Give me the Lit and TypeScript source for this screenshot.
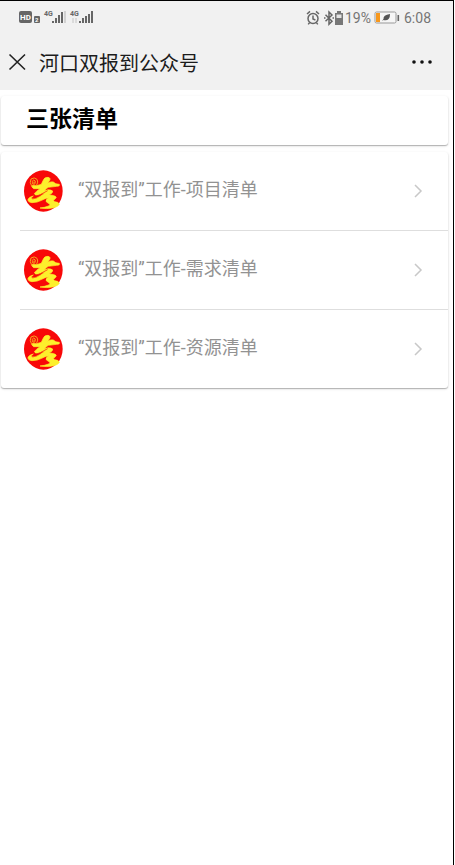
import { LitElement, html, css, svg } from "lit";
import { customElement, property } from "lit/decorators.js";

const bars = (x: number, heights: number[]) =>
  heights.map((h, i) => svg`<rect x=${x + i * 3} y=${13 - h} width="2" height=${h} />`);

@customElement("status-bar")
export class StatusBar extends LitElement {
  static styles = css`
    :host {
      display: flex;
      justify-content: space-between;
      align-items: center;
      height: 33px;
      padding: 0 22px 0 18px;
      font-size: 14px;
      color: #757575;
      fill: #666;
    }
    svg {
      display: block;
    }
    .group {
      display: flex;
      align-items: center;
    }
    .label {
      font-weight: bold;
    }
    .battery {
      margin: 0 4px 0 3px;
    }
    .phone {
      margin-right: 1px;
    }
  `;

  render() {
    return html`
      <div class="group">
        <svg width="76" height="16" viewBox="0 0 76 16" aria-label="信号">
          <rect x="1" y="1" width="13" height="12" rx="2" />
          <text x="2" y="10" font-size="8" class="label" fill="#fff">HD</text>
          <rect x="16" y="6" width="6" height="7" rx="1" />
          <text x="17" y="12" font-size="6" class="label" fill="#fff">2</text>
          <text x="26" y="6" font-size="7" class="label">4G</text>
          ${bars(34, [2, 5, 8, 11])}
          <rect x="46" y="1" width="2" height="12" fill="#d2d2d2" />
          <text x="52" y="6" font-size="7" class="label">4G</text>
          <path d="M55 8v5M58 8v5" stroke="#c4c4c4" />
          ${bars(61, [2, 5, 7, 9, 12])}
        </svg>
      </div>
      <div class="group">
        <svg class="phone" width="38" height="16" viewBox="0 0 38 16" aria-hidden="true">
          <g fill="none" stroke="#666" stroke-width="1.5">
            <circle cx="7" cy="8.5" r="5" />
            <path d="M7 5.5v3.500l2.400 1M1 4l3-2.600M13 4l-3-2.600M3.600 12.600l-1.400 1.800M10.400 12.600l1.400 1.800" />
            <path d="M19.500 4.800l6.500 6.400-3 3V2l3 3-6.500 6.200" />
            <path d="M18 8h1.500M26.500 8h1.500" />
          </g>
          <path d="M31 1h4v2h2v12h-8V3h2z" fill="#777" />
          <path d="M30.500 4.500h5v3.500h-5z" fill="#e4e4e4" />
        </svg>
        <span>19%</span>
        <svg class="battery" width="26" height="13" viewBox="0 0 26 13" aria-hidden="true">
          <rect x="1" y="1" width="21" height="11" rx="1.5" fill="#f6f6f6" stroke="#999" />
          <rect x="2" y="2" width="4" height="9" fill="#f7981d" />
          <path d="M8 10l1.500-2Q9 4 16 3q0 6-4 6.200Q10.500 9.500 9.500 9z" fill="#555" />
          <rect x="23.500" y="4" width="1.600" height="6" fill="#666" />
        </svg>
        <span>6:08</span>
      </div>
    `;
  }
}

@customElement("list-entry")
export class ListEntry extends LitElement {
  @property() label = "";

  static styles = css`
    :host {
      display: block;
    }
    .link {
      display: flex;
      align-items: center;
      height: 78px;
      padding: 0 24px 0 3px;
      color: #929292;
      font-size: 18px;
      text-decoration: none;
    }
    .logo {
      flex: none;
      margin-right: 15px;
    }
    .text {
      flex: 1;
      padding-bottom: 6px;
    }
    svg {
      display: block;
    }
  `;

  render() {
    return html`
      <a class="link" href="#">
        <svg class="logo" width="40" height="42" viewBox="24 28 120 126" aria-hidden="true">
          <ellipse cx="85" cy="91" rx="58" ry="62" fill="#f80808" />
          <g fill="#fdf02c" stroke="#fdf02c" stroke-width="2" stroke-linejoin="round">
            <path d="M84 60Q88 49 99 50Q109 52 103 61L98 68Q107 62 115 64Q121 71 133 71Q136 77 125 77L100 80Q92 84 88 91Q99 85 107 88Q117 90 111 97L103 103Q111 103 119 106Q128 109 120 115Q112 119 119 123Q132 124 133 131Q130 138 117 141Q95 146 75 142Q88 141 101 136Q109 132 100 128Q89 123 95 116L101 111Q90 113 80 119Q67 126 51 126Q38 125 39 116Q42 109 55 106Q46 112 50 115Q59 118 74 108L91 97Q80 98 71 103Q60 105 58 99Q63 92 75 84L56 84Q47 79 53 74Q65 77 79 71Z" />
          </g>
          <path d="M51 79Q42 64 48 55Q58 48 66 56Q71 64 65 73M54 71Q49 61 56 58Q64 59 60 69M57 63v10" fill="none" stroke="#f5a51d" stroke-width="3" />
          <path d="M57 109Q75 104 98 90" fill="none" stroke="#f80808" stroke-width="2" />
        </svg>
        <span class="text">${this.label}</span>
        <svg width="12" height="16" viewBox="0 0 12 16" aria-hidden="true">
          <path d="M3 2l6 6-6 6" fill="none" stroke="#c8c8c8" stroke-width="1.500" />
        </svg>
      </a>
    `;
  }
}

@customElement("app-root")
export class AppRoot extends LitElement {
  static styles = css`
    :host {
      display: block;
      box-sizing: border-box;
      min-height: 100vh;
      margin-right: 1px;
      border-top: 1px solid #000;
      border-right: 1px solid #000;
      background: #fff;
      font-family: Roboto, "Noto Sans CJK SC", sans-serif;
    }
    .top {
      background: #f1f1f1;
    }
    .nav {
      display: flex;
      align-items: center;
      height: 56px;
      padding: 0 20px 0 8px;
    }
    .title {
      flex: 1;
      margin: 0;
      font-size: 20px;
      font-weight: 400;
      color: #1c1c1c;
    }
    button {
      display: block;
      padding: 0;
      border: 0;
      background: none;
    }
    .close {
      margin-right: 12px;
    }
    svg {
      display: block;
    }
    .card {
      margin: 6px 5px 0 1px;
      border-radius: 3px;
      background: #fff;
      box-shadow: 0 1px 3px rgba(0, 0, 0, 0.12), 0 1px 1px rgba(0, 0, 0, 0.24);
    }
    .heading {
      display: flex;
      align-items: center;
      height: 49px;
      padding: 0 25px 8px;
      box-sizing: border-box;
    }
    .heading h2 {
      margin: 0;
      font-size: 23px;
      font-weight: 700;
      color: #000;
    }
    .list {
      margin-top: 7px;
      padding-left: 19px;
    }
    list-entry + list-entry {
      border-top: 1px solid #dedede;
    }
  `;

  private entries = ["项目", "需求", "资源"];

  render() {
    return html`
      <header class="top">
        <status-bar></status-bar>
        <div class="nav">
          <button class="close" aria-label="关闭">
            <svg width="19" height="18" viewBox="0 0 19 18">
              <path d="M1.500 1.500l15.500 15M17 1.500l-15.500 15" stroke="#222" stroke-width="1.600" />
            </svg>
          </button>
          <h1 class="title">河口双报到公众号</h1>
          <button aria-label="更多">
            <svg width="24" height="6" viewBox="0 0 24 6" fill="#111">
              <circle cx="5" cy="3" r="1.800" />
              <circle cx="13" cy="3" r="1.800" />
              <circle cx="21" cy="3" r="1.800" />
            </svg>
          </button>
        </div>
      </header>
      <main>
        <section class="card heading"><h2>三张清单</h2></section>
        <nav class="card list">
          ${this.entries.map((e) => html`<list-entry label="“双报到”工作-${e}清单"></list-entry>`)}
        </nav>
      </main>
    `;
  }
}
